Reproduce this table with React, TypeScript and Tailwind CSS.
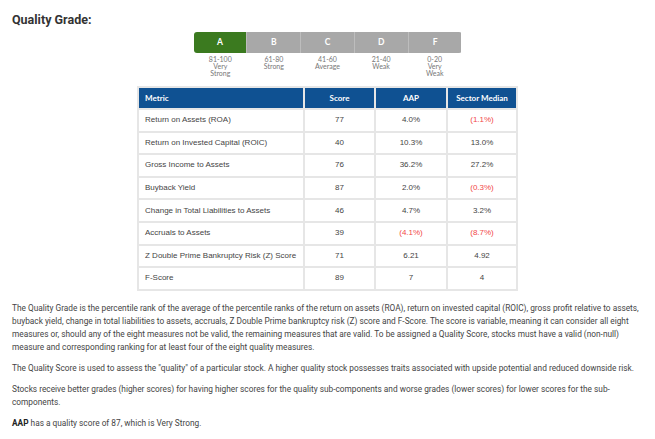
import React from 'react';

const grades = [
  { letter: 'A', range: '81-100', label: ['Very', 'Strong'], active: true },
  { letter: 'B', range: '61-80', label: ['Strong'], active: false },
  { letter: 'C', range: '41-60', label: ['Average'], active: false },
  { letter: 'D', range: '21-40', label: ['Weak'], active: false },
  { letter: 'F', range: '0-20', label: ['Very', 'Weak'], active: false },
];

const rows = [
  { metric: 'Return on Assets (ROA)', score: '77', aap: '4.0%', sector: '(1.1%)' },
  { metric: 'Return on Invested Capital (ROIC)', score: '40', aap: '10.3%', sector: '13.0%' },
  { metric: 'Gross Income to Assets', score: '76', aap: '36.2%', sector: '27.2%' },
  { metric: 'Buyback Yield', score: '87', aap: '2.0%', sector: '(0.3%)' },
  { metric: 'Change in Total Liabilities to Assets', score: '46', aap: '4.7%', sector: '3.2%' },
  { metric: 'Accruals to Assets', score: '39', aap: '(4.1%)', sector: '(8.7%)' },
  { metric: 'Z Double Prime Bankruptcy Risk (Z) Score', score: '71', aap: '6.21', sector: '4.92' },
  { metric: 'F-Score', score: '89', aap: '7', sector: '4' },
];

const isNeg = (v: string) => v.startsWith('(');

export default function App() {
  return (
    <div className="w-[655px] h-[439px] overflow-hidden bg-white px-3 pt-[11px] font-['Roboto',sans-serif]">
      {/* Title */}
      <h2 className="text-[12.5px] leading-[18px] font-bold text-[#333]">Quality Grade:</h2>

      {/* Grade bar */}
      <div className="mx-auto mt-[3px] w-[268px]">
        <div className="flex h-[21px] overflow-hidden rounded-[3px]">
          {grades.map((g, i) => (
            <div
              key={g.letter}
              className={
                'flex flex-1 items-center justify-center font-[Lato,sans-serif] text-[8.5px] font-bold text-white ' +
                (g.active ? 'bg-[#3b7a1f]' : 'bg-[#a8a8a8]') +
                (i > 0 ? ' border-l border-[#bdbdbd]' : '')
              }
            >
              {g.letter}
            </div>
          ))}
        </div>
        <div className="mt-[3px] flex">
          {grades.map((g) => (
            <div
              key={g.letter}
              className="flex flex-1 flex-col items-center font-[Lato,sans-serif] text-[7px] leading-[7px] text-[#777]"
            >
              <span>{g.range}</span>
              {g.label.map((l) => (
                <span key={l}>{l}</span>
              ))}
            </div>
          ))}
        </div>
      </div>

      {/* Metrics table */}
      <table className="mx-auto mt-[9px] w-[381px] table-fixed border-collapse border-2 border-[#e6e6e6] font-['Liberation_Sans',Arial,sans-serif] text-[8px] text-[#444]">
        <thead>
          <tr className="h-[22px] bg-[#0f5192] font-[Lato,sans-serif] text-[8px] font-bold text-white">
            <th className="w-[166px] border-x-2 border-[#e6e6e6] px-[6px] text-left">Metric</th>
            <th className="w-[71px] border-x-2 border-[#e6e6e6] text-center">Score</th>
            <th className="w-[72px] border-x-2 border-[#e6e6e6] text-center">AAP</th>
            <th className="border-x-2 border-[#e6e6e6] text-center">Sector Median</th>
          </tr>
        </thead>
        <tbody>
          {rows.map((r) => (
            <tr key={r.metric} className="h-[22.6px]">
              <td className="whitespace-nowrap border-2 border-[#e6e6e6] px-[6px]">{r.metric}</td>
              <td className="border-2 border-[#e6e6e6] text-center">{r.score}</td>
              <td className={'border-2 border-[#e6e6e6] text-center ' + (isNeg(r.aap) ? 'text-[#f24848]' : '')}>
                {r.aap}
              </td>
              <td className={'border-2 border-[#e6e6e6] text-center ' + (isNeg(r.sector) ? 'text-[#f24848]' : '')}>
                {r.sector}
              </td>
            </tr>
          ))}
        </tbody>
      </table>

      {/* Explanation */}
      <div className="mt-[11px] text-[8.3px] leading-[13px] text-[#444]">
        <p>
          The Quality Grade is the percentile rank of the average of the percentile ranks of the return on assets (ROA), return on invested capital (ROIC), gross profit relative to assets, buyback yield, change in total liabilities to assets, accruals, Z Double Prime bankruptcy risk (Z) score and F-Score. The score is variable, meaning it can consider all eight measures or, should any of the eight measures not be valid, the remaining measures that are valid. To be assigned a Quality Score, stocks must have a valid (non-null) measure and corresponding ranking for at least four of the eight quality measures.
        </p>
        <p className="mt-[8px]">
          The Quality Score is used to assess the "quality" of a particular stock. A higher quality stock possesses traits associated with upside potential and reduced downside risk.
        </p>
        <p className="mt-[8px]">
          Stocks receive better grades (higher scores) for having higher scores for the quality sub-components and worse grades (lower scores) for lower scores for the sub-components.
        </p>
        <p className="mt-[8px]">
          <span className="font-bold text-[#222]">AAP</span> has a quality score of 87, which is Very Strong.
        </p>
      </div>
    </div>
  );
}
